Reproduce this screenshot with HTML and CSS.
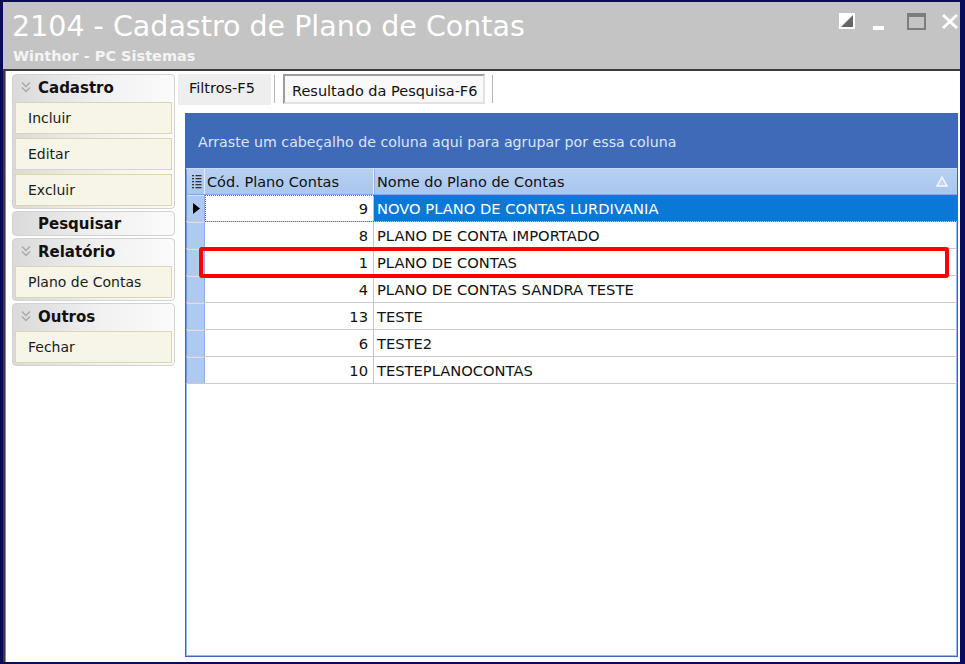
FILE: index.html
```html
<!DOCTYPE html>
<html lang="pt">
<head>
<meta charset="utf-8">
<title>2104 - Cadastro de Plano de Contas</title>
<link rel="stylesheet" href="styles.css">
</head>
<body>
<div class="frame">
  <header class="titlebar">
    <div class="titles">
      <div class="title">2104 - Cadastro de Plano de Contas</div>
      <div class="subtitle">Winthor - PC Sistemas</div>
    </div>
    <svg class="controls" width="124" height="20" viewBox="0 0 124 20">
      <rect x="3" y="2" width="16" height="16" fill="#ffffff"/>
      <polygon points="17,4 17,16 5,16" fill="#666666"/>
      <rect x="37" y="15" width="11" height="4" fill="#ffffff"/>
      <rect x="72" y="3" width="17" height="15" fill="none" stroke="#7d7d7d" stroke-width="2"/>
      <rect x="71" y="2" width="19" height="4" fill="#7d7d7d"/>
      <path d="M107 4 L121 17 M121 4 L107 17" stroke="#ffffff" stroke-width="3"/>
    </svg>
  </header>
  <div class="client">
    <aside class="sidebar">
      <section class="group">
        <div class="group-head"><svg class="chev" width="12" height="13" viewBox="0 0 12 13"><path d="M2 1.5l4 4 4-4M2 6.5l4 4 4-4" fill="none" stroke="#a8a8a8" stroke-width="1.4"/></svg>Cadastro</div>
        <div class="items">
          <div class="btn">Incluir</div>
          <div class="btn">Editar</div>
          <div class="btn">Excluir</div>
        </div>
      </section>
      <section class="group solo">
        <div class="group-head">Pesquisar</div>
      </section>
      <section class="group">
        <div class="group-head"><svg class="chev" width="12" height="13" viewBox="0 0 12 13"><path d="M2 1.5l4 4 4-4M2 6.5l4 4 4-4" fill="none" stroke="#a8a8a8" stroke-width="1.4"/></svg>Relatório</div>
        <div class="items">
          <div class="btn">Plano de Contas</div>
        </div>
      </section>
      <section class="group">
        <div class="group-head"><svg class="chev" width="12" height="13" viewBox="0 0 12 13"><path d="M2 1.5l4 4 4-4M2 6.5l4 4 4-4" fill="none" stroke="#a8a8a8" stroke-width="1.4"/></svg>Outros</div>
        <div class="items">
          <div class="btn">Fechar</div>
        </div>
      </section>
    </aside>
    <main class="main">
      <nav class="tabs">
        <div class="tab plain">Filtros-F5</div>
        <div class="sep"></div>
        <div class="tab active">Resultado da Pesquisa-F6</div>
        <div class="sep sep2"></div>
      </nav>
      <div class="grid">
        <div class="group-panel">Arraste um cabeçalho de coluna aqui para agrupar por essa coluna</div>
        <div class="grid-head">
          <div class="hcell ind-head"><svg width="10" height="16" viewBox="0 0 10 16"><g fill="#333"><rect x="0" y="1" width="2" height="1.3"/><rect x="0" y="4" width="2" height="1.3"/><rect x="0" y="7" width="2" height="1.3"/><rect x="0" y="10" width="2" height="1.3"/><rect x="0" y="13" width="2" height="1.3"/><rect x="3.5" y="1" width="6" height="1.3"/><rect x="3.5" y="4" width="6" height="1.3"/><rect x="3.5" y="7" width="6" height="1.3"/><rect x="3.5" y="10" width="6" height="1.3"/><rect x="3.5" y="13" width="6" height="1.3"/></g></svg></div>
          <div class="hcell hcode">Cód. Plano Contas</div>
          <div class="hcell hname">Nome do Plano de Contas<svg class="sort" width="12" height="11" viewBox="0 0 12 11"><polygon points="6,1 11,10 1,10" fill="#c3d6f4" stroke="#f5f9ff" stroke-width="1.4"/></svg></div>
        </div>
        <div class="row sel">
          <div class="ind"><svg width="7" height="11" viewBox="0 0 7 11"><polygon points="0,0 7,5.5 0,11" fill="#000"/></svg></div>
          <div class="code">9</div>
          <div class="name">NOVO PLANO DE CONTAS LURDIVANIA</div>
        </div>
        <div class="row">
          <div class="ind"></div>
          <div class="code">8</div>
          <div class="name">PLANO DE CONTA IMPORTADO</div>
        </div>
        <div class="row">
          <div class="ind"></div>
          <div class="code">1</div>
          <div class="name">PLANO DE CONTAS</div>
        </div>
        <div class="row">
          <div class="ind"></div>
          <div class="code">4</div>
          <div class="name">PLANO DE CONTAS SANDRA TESTE</div>
        </div>
        <div class="row">
          <div class="ind"></div>
          <div class="code">13</div>
          <div class="name">TESTE</div>
        </div>
        <div class="row">
          <div class="ind"></div>
          <div class="code">6</div>
          <div class="name">TESTE2</div>
        </div>
        <div class="row">
          <div class="ind"></div>
          <div class="code">10</div>
          <div class="name">TESTEPLANOCONTAS</div>
        </div>
        <div class="mark"></div>
      </div>
    </main>
  </div>
</div>
</body>
</html>
```
FILE: styles.css
```css
* { box-sizing: border-box; }
html, body { margin: 0; padding: 0; }
body {
  width: 965px;
  height: 664px;
  overflow: hidden;
  background: #0b0b5c;
  font-family: "DejaVu Sans", sans-serif;
}
.frame {
  height: 664px;
  padding: 2px 5px 2px 3px;
  display: flex;
  flex-direction: column;
}
.titlebar {
  height: 69px;
  flex: none;
  background: #c4c4c4;
  border-bottom: 2px solid #3b3b3b;
  display: flex;
  justify-content: space-between;
  padding-left: 9px;
}
.title {
  font-size: 28.5px;
  line-height: 30px;
  color: #ffffff;
  padding-top: 10px;
  white-space: nowrap;
}
.subtitle {
  font-size: 14.5px;
  font-weight: bold;
  line-height: 16px;
  color: #f4f4f4;
  margin-top: 6px;
  padding-left: 1px;
}
.controls { margin-top: 9px; flex: none; }

.client {
  flex: 1;
  min-height: 0;
  background: #ffffff;
  border-left: 2px solid #3b3b3b;
  box-shadow: inset 1px 0 #8c8c8c;
  display: flex;
  gap: 3px;
  padding: 3px 2px 5px 7px;
}
.sidebar {
  width: 163px;
  flex: none;
  display: flex;
  flex-direction: column;
  gap: 2px;
}
.group {
  border: 1px solid #d2d2d2;
  border-radius: 4px;
  background: linear-gradient(to right, #dadada, #f1f1f1 55%, #fbfbfb);
}
.group-head {
  height: 25px;
  display: flex;
  align-items: center;
  padding-left: 7px;
  font-weight: bold;
  font-size: 15px;
  color: #111111;
}
.group-head .chev { margin-right: 6px; flex: none; }
.group.solo .group-head { height: 23px; padding-left: 25px; }
.items {
  padding: 2px;
  display: flex;
  flex-direction: column;
  gap: 4px;
}
.btn {
  height: 32px;
  border: 1px solid #dcd5b0;
  background: #f7f5e8;
  font-size: 14px;
  line-height: 31px;
  padding-left: 12px;
  color: #1b1b1b;
}

.main {
  flex: 1;
  min-width: 0;
  display: flex;
  flex-direction: column;
}
.tabs {
  height: 31px;
  flex: none;
  display: flex;
  align-items: stretch;
}
.tab {
  font-size: 14.5px;
  color: #111111;
  white-space: nowrap;
}
.tab.plain {
  width: 93px;
  background: #eeeeee;
  padding: 6px 0 0 11px;
}
.sep {
  width: 1px;
  background: #b4b4b4;
  margin: 1px 8px 2px 3px;
}
.sep2 { margin-left: 7px; }
.tab.active {
  width: 202px;
  border: 2px solid;
  border-color: #9d9d9d #e2e2e2 #e2e2e2 #9d9d9d;
  background: #f9f9f9;
  padding: 7px 0 0 7px;
  margin-bottom: 1px;
}

.grid {
  flex: 1;
  margin-top: 8px;
  margin-left: 7px;
  border: 1px solid #3f67b3;
  box-shadow: inset 0 0 0 1px #9fb8e4;
  position: relative;
  background: #ffffff;
  display: flex;
  flex-direction: column;
}
.group-panel {
  height: 54px;
  flex: none;
  background: #3e6ab7;
  color: #dbe5f6;
  font-size: 14.2px;
  padding: 20px 0 0 12px;
  white-space: nowrap;
}
.grid-head, .row {
  display: grid;
  grid-template-columns: 19px 169px 1fr;
  flex: none;
  font-size: 14.5px;
  color: #111111;
}
.row { font-size: 14.7px; }
.grid-head {
  height: 27px;
  background: linear-gradient(#b7d0f2, #a9c6ed);
  border-top: 1px solid #cddcf4;
  border-bottom: 1px solid #86a6dc;
}
.hcell {
  display: flex;
  align-items: center;
  white-space: nowrap;
}
.ind-head {
  justify-content: center;
  padding-left: 2px;
  border-left: 1px solid #6f93d3;
  border-right: 1px solid #e3ecfa;
}
.hcode {
  padding-left: 2px;
  border-right: 1px solid #e6eefb;
  box-shadow: 1px 0 #8fb0e2;
}
.hname {
  padding-left: 3px;
  padding-right: 9px;
  justify-content: space-between;
}
.row {
  height: 27px;
  border-bottom: 1px solid #cacaca;
}
.row > div {
  display: flex;
  align-items: center;
  white-space: nowrap;
}
.ind {
  background: #aecaef;
  border-left: 1px solid #6f93d3;
  border-right: 1px solid #8eaee2;
  box-shadow: inset 0 1px #d4e2f7;
  padding-left: 6px;
}
.code {
  justify-content: flex-end;
  padding-right: 5px;
  border-right: 1px solid #c4c4c4;
}
.name { padding-left: 3px; }
.row.sel { position: relative; }
.row.sel .name { background: #0a78d6; color: #ffffff; }
.row.sel::after {
  content: "";
  position: absolute;
  left: 19px;
  right: 1px;
  top: 0;
  bottom: -1px;
  border: 1px dotted #6f6a5e;
  pointer-events: none;
}
.mark {
  position: absolute;
  left: 13px;
  top: 133px;
  width: 750px;
  height: 31px;
  border: 4px solid #ff0000;
  border-radius: 3px;
}
```
